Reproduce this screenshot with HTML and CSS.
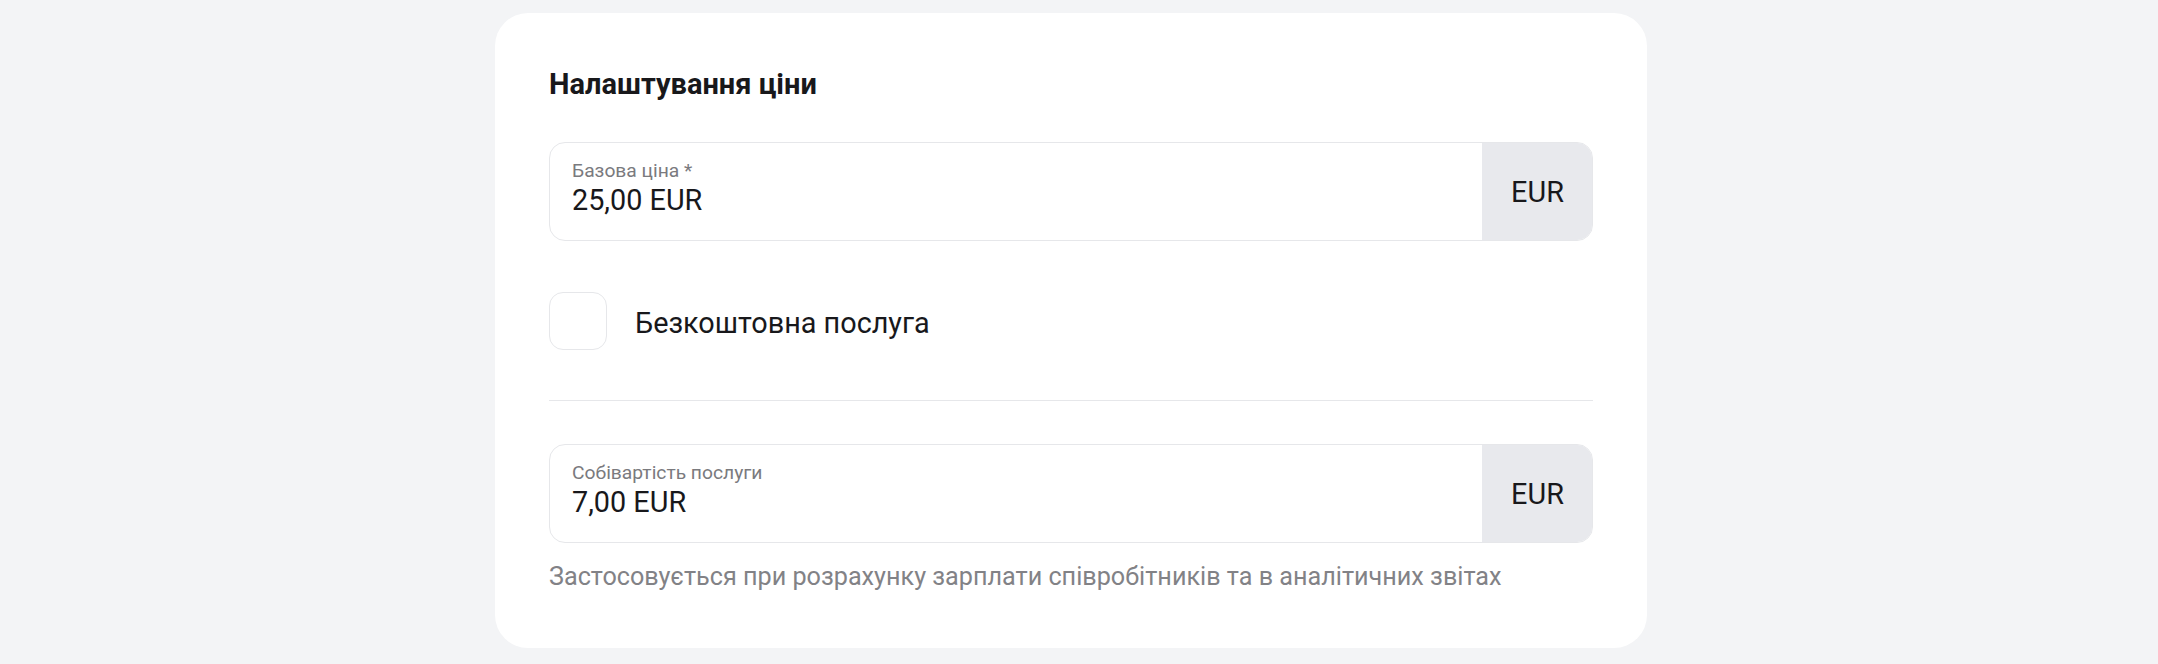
FILE: index.html
```html
<!DOCTYPE html>
<html lang="uk">
<head>
<meta charset="utf-8">
<title>Налаштування ціни</title>
<link rel="stylesheet" href="styles.css">
</head>
<body>
<main class="page">
  <section class="card">
    <h2 class="card-title">Налаштування ціни</h2>

    <div class="field">
      <div class="field-main">
        <span class="field-label">Базова ціна *</span>
        <span class="field-value">25,00 EUR</span>
      </div>
      <div class="field-addon">EUR</div>
    </div>

    <label class="check-row">
      <span class="checkbox"></span>
      <span class="check-label">Безкоштовна послуга</span>
    </label>

    <hr class="divider">

    <div class="field">
      <div class="field-main">
        <span class="field-label">Собівартість послуги</span>
        <span class="field-value">7,00 EUR</span>
      </div>
      <div class="field-addon">EUR</div>
    </div>
    <p class="hint">Застосовується при розрахунку зарплати співробітників та в аналітичних звітах</p>
  </section>
</main>
</body>
</html>
```

FILE: styles.css
```css
* { box-sizing: border-box; }

html, body {
  margin: 0;
  padding: 0;
  background: #f3f4f6;
  font-family: Roboto, "Noto Sans", "Liberation Sans", sans-serif;
  color: #18181b;
}

.page {
  padding: 13px 511px 0 495px;
}

.card {
  background: #ffffff;
  border-radius: 33px;
  padding: 54px 54px 55px 54px;
  display: flex;
  flex-direction: column;
}

.card-title {
  margin: 0 0 41px 0;
  font-size: 29px;
  line-height: 34px;
  font-weight: 700;
  color: #18181b;
}

.field {
  display: flex;
  height: 99px;
  border: 1px solid #e6e7ea;
  border-radius: 16px;
  overflow: hidden;
}

.field-main {
  flex: 1;
  display: flex;
  flex-direction: column;
  padding: 17px 22px 0 22px;
  gap: 1px;
}

.field-label {
  font-size: 19.25px;
  line-height: 22px;
  color: #7a7a7e;
}

.field-value {
  font-size: 28.8px;
  line-height: 34px;
  color: #18181b;
}

.field-addon {
  width: 111px;
  background: #e8e9ed;
  display: flex;
  align-items: center;
  justify-content: center;
  font-size: 28.8px;
  color: #18181b;
  margin: -1px -1px -1px 0;
}

.check-row {
  display: flex;
  align-items: center;
  gap: 28px;
  margin-top: 51px;
}

.checkbox {
  width: 58px;
  height: 58px;
  border: 1px solid #e6e7ea;
  border-radius: 14px;
  background: #fff;
}

.check-label {
  font-size: 28.8px;
  line-height: 34px;
  padding-top: 4px;
  color: #18181b;
}

.divider {
  margin: 50px 0 43px 0;
  border: 0;
  height: 1px;
  background: #e6e7ea;
}

.hint {
  margin: 18px 0 0 0;
  font-size: 25.2px;
  line-height: 32px;
  color: #828286;
}
```
